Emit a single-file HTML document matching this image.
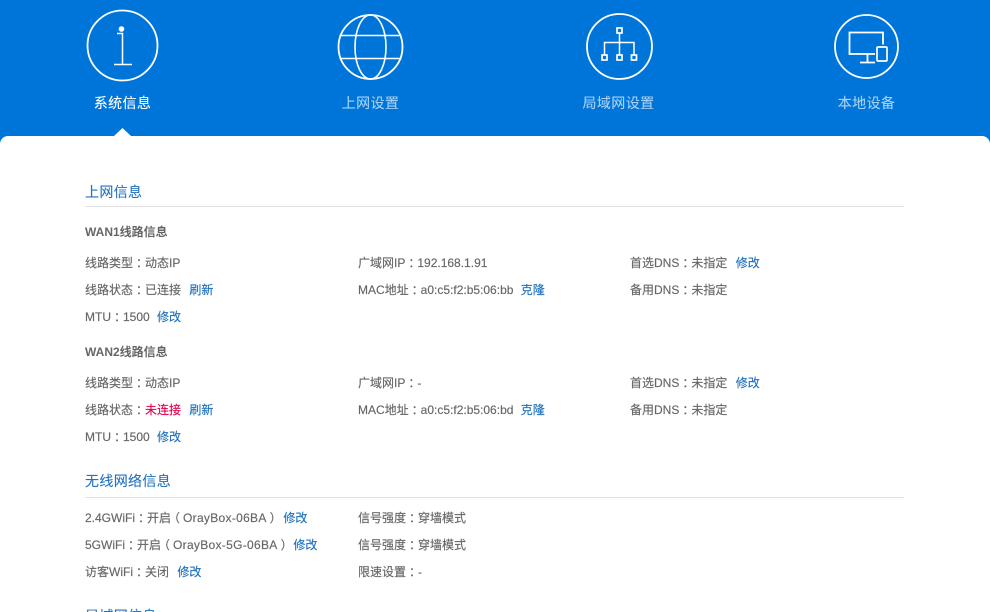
<!DOCTYPE html>
<html lang="zh">
<head>
<meta charset="utf-8">
<style>
html,body{margin:0;padding:0;width:990px;height:612px;overflow:hidden;background:#0075d9}
body{position:relative;font-family:"Liberation Sans","Noto Sans CJK SC",sans-serif;font-size:12px;color:#666}
.card{position:absolute;left:0;top:136px;width:990px;height:476px;background:#fff;border-radius:8px 8px 0 0}
.nav{position:absolute;top:94px;height:18px;line-height:18px;font-size:14px;letter-spacing:.4px;color:#a9d2f5;white-space:nowrap;text-align:center;width:120px;-webkit-text-stroke:.1px}
.nav.on{color:#fff}
.t{position:absolute;white-space:nowrap;height:18px;line-height:18px;-webkit-text-stroke:.15px}
.h{position:absolute;left:85px;font-size:14px;letter-spacing:.35px;color:#2273bd;height:20px;line-height:20px;white-space:nowrap;-webkit-text-stroke:.1px}
.hr{position:absolute;left:85px;width:819px;height:1px;background:#e2e2e2}
.b{font-weight:bold;color:#666;-webkit-text-stroke:0}
a{color:#1f70bd;text-decoration:none;margin-left:5px}
.r{color:#e0004d}
.s{letter-spacing:.3px}
i{font-style:normal;display:inline-block;width:12px;transform:translateX(3px)}
i.l{transform:translateX(-3px)}
i.e{transform:translateX(3px)}
svg{position:absolute;left:0;top:0}
</style>
</head>
<body>
<svg width="990" height="136" viewBox="0 0 990 136" fill="none" stroke="#fff" stroke-width="1.800">
<circle cx="122.500" cy="45.500" r="35"/>
<circle cx="121.500" cy="29" r="2.800" fill="#fff" stroke="none"/>
<path d="M117 33.500H122.500V64.500M114 64.500H132" stroke-width="1.500"/>
<circle cx="370.500" cy="47" r="32"/>
<ellipse cx="370.500" cy="47" rx="15.500" ry="32" stroke-width="1.600"/>
<path d="M339.500 35.500H401.500M339.500 58.500H401.500" stroke-width="1.500"/>
<circle cx="619.500" cy="46.500" r="32.500"/>
<rect x="617" y="28" width="5" height="5" stroke-width="1.700"/>
<rect x="602" y="55" width="5" height="5" stroke-width="1.700"/>
<rect x="617" y="55" width="5" height="5" stroke-width="1.700"/>
<rect x="631.500" y="55" width="5" height="5" stroke-width="1.700"/>
<path d="M619.500 33V55M604.500 55V42.500H634V55" stroke-width="1.500"/>
<circle cx="866.500" cy="46.500" r="31.500"/>
<path d="M875 54H849.500V32.500H883V44.500M867.500 54V62.500M860 62.500H875"/>
<rect x="877" y="47" width="10" height="14" rx="1" stroke-width="1.700"/>
</svg>
<div class="nav on" style="left:62.500px">系统信息</div>
<div class="nav" style="left:310.500px">上网设置</div>
<div class="nav" style="left:558.500px">局域网设置</div>
<div class="nav" style="left:806.500px">本地设备</div>
<div class="card"></div>
<svg width="990" height="136" viewBox="0 0 990 136"><path d="M114 136L122.500 128L131 136Z" fill="#fff"/></svg>

<div class="h" style="top:182px">上网信息</div>
<div class="hr" style="top:206px"></div>
<div class="t b" style="left:85px;top:223px">WAN1线路信息</div>
<div class="t" style="left:85px;top:254px">线路类型<i>：</i>动态IP</div>
<div class="t" style="left:358px;top:254px">广域网IP<i>：</i>192.168.1.91</div>
<div class="t" style="left:630px;top:254px">首选DNS<i>：</i>未指定 <a>修改</a></div>
<div class="t" style="left:85px;top:281px">线路状态<i>：</i>已连接 <a>刷新</a></div>
<div class="t" style="left:358px;top:281px">MAC地址<i>：</i>a0:c5:f2:b5:06:bb <a style="margin-left:4px">克隆</a></div>
<div class="t" style="left:630px;top:281px">备用DNS<i>：</i>未指定</div>
<div class="t" style="left:85px;top:308px">MTU<i>：</i>1500 <a style="margin-left:4px">修改</a></div>

<div class="t b" style="left:85px;top:343px">WAN2线路信息</div>
<div class="t" style="left:85px;top:374px">线路类型<i>：</i>动态IP</div>
<div class="t" style="left:358px;top:374px">广域网IP<i>：</i>-</div>
<div class="t" style="left:630px;top:374px">首选DNS<i>：</i>未指定 <a>修改</a></div>
<div class="t" style="left:85px;top:401px">线路状态<i>：</i><span class="r">未连接</span> <a>刷新</a></div>
<div class="t" style="left:358px;top:401px">MAC地址<i>：</i>a0:c5:f2:b5:06:bd <a style="margin-left:4px">克隆</a></div>
<div class="t" style="left:630px;top:401px">备用DNS<i>：</i>未指定</div>
<div class="t" style="left:85px;top:428px">MTU<i>：</i>1500 <a style="margin-left:4px">修改</a></div>

<div class="h" style="top:471px">无线网络信息</div>
<div class="hr" style="top:497px"></div>
<div class="t" style="left:85px;top:509px">2.4GWiFi<i>：</i>开启<i class="l">（</i><span class="s">OrayBox-06BA</span><i class="e">）</i> <a style="margin-left:1.400px">修改</a></div>
<div class="t" style="left:358px;top:509px">信号强度<i>：</i>穿墙模式</div>
<div class="t" style="left:85px;top:536px">5GWiFi<i>：</i>开启<i class="l">（</i><span class="s">OrayBox-5G-06BA</span><i class="e">）</i> <a style="margin-left:.500px">修改</a></div>
<div class="t" style="left:358px;top:536px">信号强度<i>：</i>穿墙模式</div>
<div class="t" style="left:85px;top:563px">访客WiFi<i>：</i>关闭 <a>修改</a></div>
<div class="t" style="left:358px;top:563px">限速设置<i>：</i>-</div>

<div class="h" style="top:606px">局域网信息</div>
</body>
</html>
